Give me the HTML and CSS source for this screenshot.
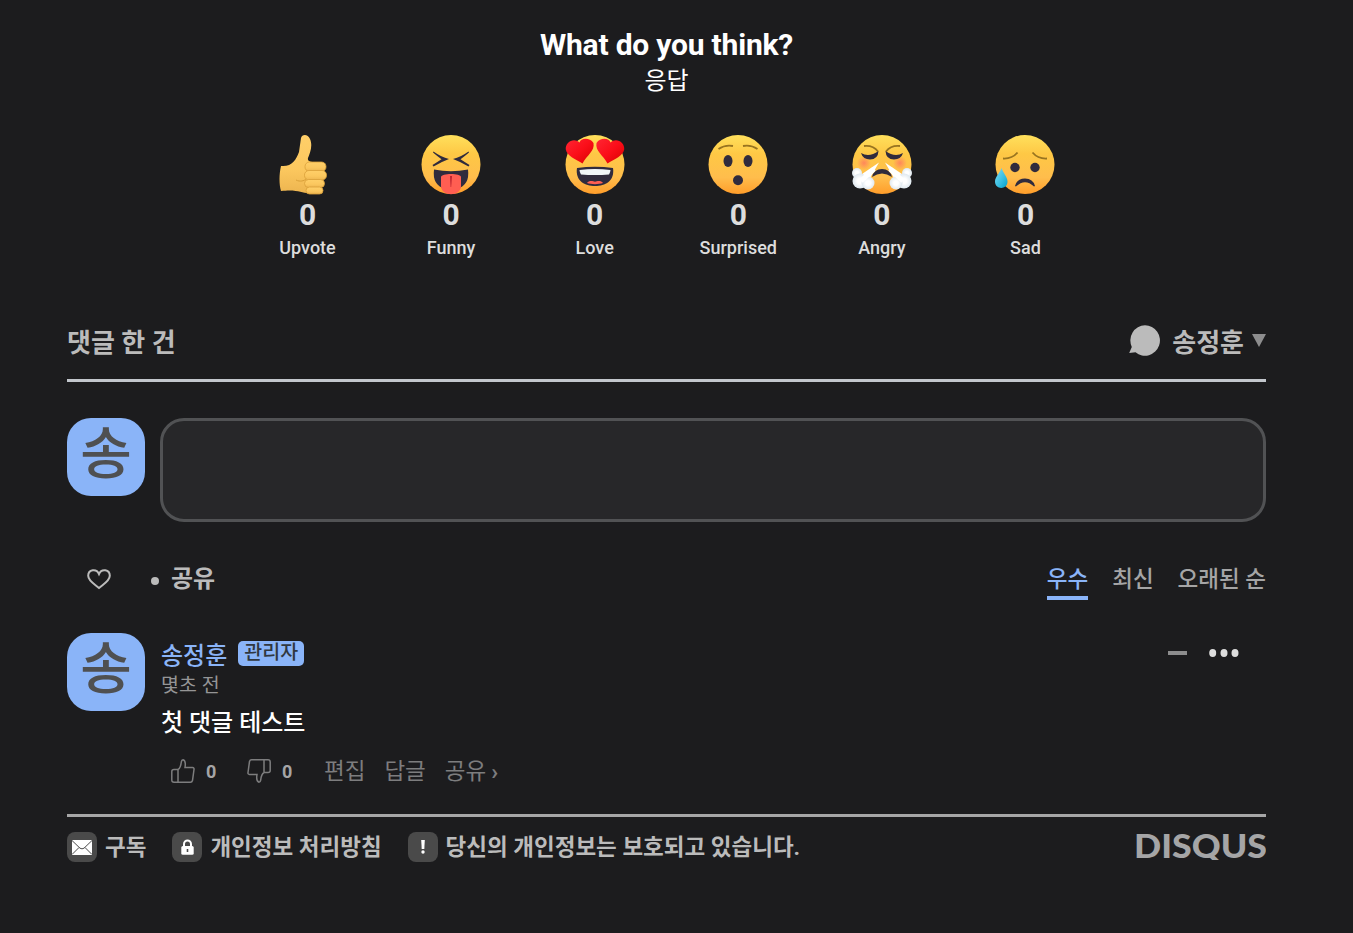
FILE: index.html
```html
<!DOCTYPE html>
<html lang="ko">
<head>
<meta charset="utf-8">
<title>Disqus</title>
<link rel="stylesheet" href="styles.css">
</head>
<body>
<svg class="defs" aria-hidden="true">
  <defs>
    <linearGradient id="face" x1="0" y1="0" x2="0" y2="1">
      <stop offset="0" stop-color="#ffe05c"/><stop offset=".32" stop-color="#fec845"/>
      <stop offset=".72" stop-color="#ffbd4c"/><stop offset="1" stop-color="#ff9d2a"/>
    </linearGradient>
    <linearGradient id="hand" x1="0" y1="0" x2="0" y2="1">
      <stop offset="0" stop-color="#ffcf69"/><stop offset=".6" stop-color="#fbc75e"/><stop offset="1" stop-color="#edb550"/>
    </linearGradient>
    <linearGradient id="heart" x1="0" y1="0" x2="1" y2="1">
      <stop offset="0" stop-color="#ff2633"/><stop offset=".5" stop-color="#fb0e19"/><stop offset="1" stop-color="#d80000"/>
    </linearGradient>
    <linearGradient id="tear" x1="0" y1="0" x2="1" y2="1">
      <stop offset="0" stop-color="#80dcf5"/><stop offset=".6" stop-color="#35bde0"/><stop offset="1" stop-color="#009fca"/>
    </linearGradient>
    <radialGradient id="puff"><stop offset=".35" stop-color="#fff"/><stop offset="1" stop-color="#dfe8ef"/></radialGradient>
    <radialGradient id="blush"><stop offset="0" stop-color="#ff7262" stop-opacity=".75"/><stop offset="1" stop-color="#ff7262" stop-opacity="0"/></radialGradient>
  </defs>
</svg>
<main class="page">
  <section class="reactions">
    <h1 class="reactions-title">What do you think?</h1>
    <p class="reactions-sub">응답</p>
    <ul class="reaction-list">
      <li class="reaction">
        <svg class="emoji" viewBox="0 0 60 60">
          <path d="M23 3C24-1 30-1 32 4C35 11 32 18 30 23C29 27 34 27 40 27L31 58C23 58 19 54 3 56C1 50 1 39 3 31C14 32 18 25 21 17Z" fill="url(#hand)"/>
          <g fill="url(#hand)" stroke="#d9a039" stroke-width=".8">
            <rect x="27" y="27" width="21" height="9.5" rx="4.5"/><rect x="26.5" y="35.5" width="22" height="9.5" rx="4.5"/>
            <rect x="26.5" y="44.5" width="20" height="8" rx="4"/><rect x="28" y="52" width="17" height="7" rx="3.5"/>
          </g>
          <path d="M18 45c4 2 8 1 10-1" fill="none" stroke="#d9a039" stroke-width="1"/>
        </svg>
        <b class="reaction-count">0</b><span class="reaction-name">Upvote</span>
      </li>
      <li class="reaction">
        <svg class="emoji" viewBox="0 0 60 60">
          <circle cx="30" cy="29.5" r="29.5" fill="url(#face)"/>
          <path d="M12.500 16.500Q20 22 28 24Q20 27 12.500 31.500L11.500 30Q17 26.500 20.500 24.200Q16 21 12 17.500ZM47.500 16.500Q40 22 32 24Q40 27 47.500 31.500L48.500 30Q43 26.500 39.500 24.200Q44 21 48 17.500Z" fill="#302b3d"/>
          <path d="M13 34.500Q30 38 47 34.500Q49 50 36 54H24Q11 50 13 34.500Z" fill="#302b3d"/>
          <path d="M20 42c0-4 20-4 20 0v9c0 11-20 11-20 0z" fill="#ff5e52"/>
          <path d="M29 41h2l-.8 11h-.6z" fill="#bd2530"/>
        </svg>
        <b class="reaction-count">0</b><span class="reaction-name">Funny</span>
      </li>
      <li class="reaction">
        <svg class="emoji" viewBox="0 0 60 60">
          <circle cx="30" cy="29.5" r="29.500" fill="url(#face)"/>
          <path id="love-heart" d="M17.500 28.500C10 24 2 21 .8 14.500C0 7 9 2 14.500 7.500C16 2.500 25 2.500 28.500 8C30 16 22 20 17.500 28.500Z" fill="url(#heart)"/>
          <path d="M42.500 28.500C50 24 58 21 59.200 14.500C60 7 51 2 45.500 7.500C44 2.500 35 2.500 31.500 8C30 16 38 20 42.500 28.500Z" fill="url(#heart)"/>
          <path d="M12 33Q30 30.500 48 33C50 46 40 51 30 51S10 46 12 33Z" fill="#302b3d"/>
          <path d="M14.500 35Q30 33 45.500 35Q45.500 37 44 39.500Q30 40.500 16 39.500Q14.500 37 14.500 35Z" fill="#f1f5f8"/>
          <path d="M22 48c2-3 6-2 8-1.200c2-.8 6-1.800 8 1.200c-4 1.500-12 1.500-16 0z" fill="#ff5e52"/>
        </svg>
        <b class="reaction-count">0</b><span class="reaction-name">Love</span>
      </li>
      <li class="reaction">
        <svg class="emoji" viewBox="0 0 60 60">
          <circle cx="30" cy="29.500" r="29.500" fill="url(#face)"/>
          <path d="M10.500 14Q17 9.500 25 11M35 11Q43 9.500 49.500 14" fill="none" stroke="#987420" stroke-width="1.800"/>
          <ellipse cx="20" cy="26" rx="4.500" ry="6" fill="#302b3d"/><ellipse cx="40" cy="26" rx="4.500" ry="6" fill="#302b3d"/>
          <circle cx="30" cy="45.200" r="5" fill="#302b3d"/>
        </svg>
        <b class="reaction-count">0</b><span class="reaction-name">Surprised</span>
      </li>
      <li class="reaction">
        <svg class="emoji" viewBox="0 0 60 60">
          <circle cx="30" cy="29.500" r="29.500" fill="url(#face)"/>
          <circle cx="12" cy="28" r="7" fill="url(#blush)"/><circle cx="48" cy="28" r="7" fill="url(#blush)"/>
          <path d="M12 11Q21 10 26 16.500M48 11Q39 10 34 16.500" fill="none" stroke="#987420" stroke-width="1.800"/>
          <path d="M9 18Q17 23 26.500 16Q26 24.500 18 24.500Q11 24.500 9 18ZM51 18Q43 23 33.500 16Q34 24.500 42 24.500Q49 24.500 51 18Z" fill="#302b3d"/>
          <path d="M20 42Q22 34 30 34T40 42Q30 35 20 42Z" fill="#302b3d"/>
          <path d="M27 27.500L18 43L15 49L6 42L10 39ZM33 27.500L42 43L45 49L54 42L50 39Z" fill="#fff"/>
          <g fill="url(#puff)"><circle cx="5" cy="38" r="5"/><circle cx="8" cy="46" r="7.500"/><circle cx="16" cy="48" r="6.500"/><circle cx="55" cy="38" r="5"/><circle cx="52" cy="46" r="7.500"/><circle cx="44" cy="48" r="6.500"/></g>
          <path d="M22 34L9 46M38 34L51 46" stroke="#fff" stroke-width="5"/>
        </svg>
        <b class="reaction-count">0</b><span class="reaction-name">Angry</span>
      </li>
      <li class="reaction">
        <svg class="emoji" viewBox="0 0 60 60">
          <circle cx="30" cy="29.500" r="29.500" fill="url(#face)"/>
          <path d="M8 23.500Q17 24 22.500 17.500M52 23.500Q43 24 37.500 17.500" fill="none" stroke="#987420" stroke-width="1.800"/>
          <circle cx="20" cy="32.500" r="4.700" fill="#302b3d"/><circle cx="40" cy="32.500" r="4.700" fill="#302b3d"/>
          <path d="M20 51Q22 43.500 30 43.500T40 51L39 51.500Q30 43 21 51.500Z" fill="#302b3d"/>
          <path d="M6.500 33C8 38 12.500 42 12.500 46.500C12.500 55 0 55 0 46.500C0 42 5 38 6.500 33Z" fill="url(#tear)"/>
        </svg>
        <b class="reaction-count">0</b><span class="reaction-name">Sad</span>
      </li>
    </ul>
  </section>

  <header class="thread-head">
    <span class="thread-count">댓글 한 건</span>
    <div class="account">
      <svg class="bubble" viewBox="0 0 31 31"><path d="M16 0.300a15 15.200 0 1 1-9.500 27L.2 28L2.800 22A15 15.200 0 0 1 16 .3Z" fill="#bbb"/></svg>
      <span class="account-name">송정훈</span>
      <svg class="caret" viewBox="0 0 14 13"><path d="M0 0h14L7 13z" fill="#8d8d8e"/></svg>
    </div>
  </header>

  <section class="composer">
    <div class="avatar"><span class="avatar-text">송</span></div>
    <div class="composer-box"></div>
  </section>

  <nav class="thread-nav">
    <svg class="favorite" viewBox="0 0 24 21"><path d="M12 19C8 15.500 1.200 12 1.200 6.800C1.200 .2 9.500-.8 12 5C14.500-.8 22.800 .2 22.800 6.800C22.800 12 16 15.500 12 19Z" fill="none" stroke="#bbb" stroke-width="2"/></svg>
    <span class="dot"></span>
    <span class="share">공유</span>
    <div class="sorts"><span class="sort sort-on">우수</span><span class="sort">최신</span><span class="sort">오래된 순</span></div>
  </nav>

  <article class="comment">
    <div class="avatar avatar-comment"><span class="avatar-text">송</span></div>
    <div class="comment-body">
      <div class="byline">
        <span class="author">송정훈</span><span class="badge">관리자</span>
        <div class="tools"><span class="minus"></span><svg class="more" viewBox="0 0 30 8"><g fill="#ddd"><ellipse cx="3.700" cy="4" rx="3.500" ry="3.900"/><ellipse cx="15" cy="4" rx="3.500" ry="3.900"/><ellipse cx="26" cy="4" rx="3.500" ry="3.900"/></g></svg></div>
      </div>
      <div class="time">몇초 전</div>
      <p class="message">첫 댓글 테스트</p>
      <div class="actions">
        <svg class="thumb" viewBox="0 0 24 24"><path d="M7 10.500C9.500 9 10 6 10.300 3Q10.700.8 12 .8C14.500 1.500 14.500 5.500 14 8.500H21.500Q23.300 8.700 23 10.500L21.500 21.500Q21 23.200 19.500 23.200H3Q.8 23.200.8 21V12.500Q.8 10.500 3 10.500H7V23" fill="none" stroke="#7d7d7e" stroke-width="1.500"/></svg>
        <b class="votes">0</b>
        <svg class="thumb thumb-down" viewBox="0 0 24 24"><path d="M17 13.500C14.500 15 14 18 13.700 21Q13.300 23.200 12 23.200C9.500 22.500 9.500 18.500 10 15.500H2.500Q.7 15.300 1 13.500L2.500 2.500Q3 .8 4.500 .8H21Q23.200 .8 23.200 3V11.500Q23.200 13.500 21 13.500H17V1" fill="none" stroke="#7d7d7e" stroke-width="1.500"/></svg>
        <b class="votes">0</b>
        <span class="action action-edit">편집</span><span class="action">답글</span><span class="action">공유<span class="chevron">›</span></span>
      </div>
    </div>
  </article>

  <footer class="footer">
    <span class="foot-icon"><svg class="mail" viewBox="0 0 20 15"><path d="M0 0h20v15H0z" fill="#fff"/><path d="M0 .5L8 8.200Q10 9.500 12 8.200L20 .5M0 14.500L7 7.500M20 14.500L13 7.500" fill="none" stroke="#4a4a4a" stroke-width="1"/></svg></span>
    <span class="foot-link">구독</span>
    <span class="foot-icon foot-gap-lock"><svg class="lock" viewBox="0 0 13 16"><path d="M3 8V5a3.500 3.500 0 0 1 7 0v3" fill="none" stroke="#fff" stroke-width="2"/><rect x=".3" y="7" width="12.400" height="8.700" rx="1.500" fill="#fff"/><path d="M6.500 10v3" stroke="#4a4a4a" stroke-width="1.600"/></svg></span>
    <span class="foot-link">개인정보 처리방침</span>
    <span class="foot-icon foot-gap-info"><svg class="bang" viewBox="0 0 4 14"><path d="M.2 0h3.600l-.5 9H.7z" fill="#fff"/><circle cx="2" cy="12" r="1.700" fill="#fff"/></svg></span>
    <span class="foot-link">당신의 개인정보는 보호되고 있습니다.</span>
    <svg class="brand" viewBox="0 0 130 26"><text class="brand-text" x="-2" y="24" textLength="133" lengthAdjust="spacingAndGlyphs">DISQUS</text></svg>
  </footer>
</main>
</body>
</html>
```
FILE: styles.css
```css
* { box-sizing: border-box; }
body { margin: 0; background: #1c1c1e; color: #bbb; font-family: Roboto, "Noto Sans CJK KR", sans-serif; }
.defs { position: absolute; width: 0; height: 0; }
.page { width: 1199px; height: 933px; margin-left: 67px; padding-top: 24px; overflow: hidden; }
h1, p, ul { margin: 0; padding: 0; }

.reactions { display: flex; flex-direction: column; align-items: center; height: 280px; }
.reactions-title { color: #fff; font-size: 30px; line-height: 42px; font-weight: 700; letter-spacing: -.2px; }
.reactions-sub { color: #fff; font-size: 24px; line-height: 30px; }
.reaction-list { display: grid; grid-template-columns: repeat(6, 143.600px); margin-top: 39px; list-style: none; }
.reaction { display: flex; flex-direction: column; align-items: center; color: #ddd; }
.emoji { width: 60px; height: 60px; }
.reaction-count { font-size: 30px; line-height: 40px; font-weight: 700; }
.reaction-name { font-size: 18px; line-height: 26px; font-weight: 500; }

.thread-head { display: flex; justify-content: space-between; align-items: center; height: 78px; padding-bottom: 3px; border-bottom: 3px solid #c2c6cc; font-size: 26px; font-weight: 700; }
.account { display: flex; align-items: center; }
.bubble { width: 31px; height: 31px; margin-right: 12px; }
.caret { width: 14px; height: 13px; margin-left: 8px; }

.composer { display: flex; gap: 15px; margin-top: 36px; }
.avatar { display: flex; justify-content: center; flex: none; width: 78px; height: 78px; border-radius: 24px; background: #8ab4f8; color: #4f5051; }
.avatar-text { font-size: 56px; line-height: 72px; font-weight: 500; }
.composer-box { flex: 1; height: 104px; border: 3px solid #515254; border-radius: 24px; background: #272729; }

.thread-nav { display: flex; align-items: center; height: 42px; margin-top: 36px; padding-left: 20px; }
.favorite { width: 24px; height: 21px; }
.dot { width: 8px; height: 8px; margin: 3px 12px 0 40px; border-radius: 50%; background: #bbb; }
.share { font-size: 24px; line-height: 36px; font-weight: 700; }
.sorts { display: flex; gap: 24px; margin-left: auto; }
.sort { height: 42px; border-bottom: 4px solid transparent; color: #a5a5a6; font-size: 22.500px; line-height: 42px; font-weight: 500; }
.sort-on { border-color: #8ab4f8; color: #8ab4f8; }

.comment { display: flex; gap: 16px; height: 181px; margin-top: 33px; }
.comment-body { flex: 1; }
.byline { display: flex; align-items: center; height: 40px; }
.author { color: #8ab4f8; font-size: 24px; font-weight: 500; }
.badge { width: 66px; height: 25px; margin-left: 11px; border-radius: 5px; background: #8ab4f8; color: #303740; font-size: 19.500px; line-height: 23px; font-weight: 500; text-align: center; }
.tools { display: flex; align-items: center; gap: 22px; margin: 0 27px 0 auto; }
.minus { width: 19px; height: 4px; background: #8d8d8e; }
.more { width: 30px; height: 8px; }
.time { color: #959596; font-size: 19.500px; line-height: 25px; }
.message { color: #fff; font-size: 24px; line-height: 50px; font-weight: 500; }
.actions { display: flex; align-items: center; height: 46px; padding-left: 10px; color: #7d7d7e; }
.thumb { width: 24px; height: 24px; }
.thumb-down { margin-left: 29px; }
.votes { width: 12px; margin-left: 11px; color: #a5a5a6; font-size: 18px; }
.action { margin-left: 19px; font-size: 22.500px; line-height: 44px; }
.action-edit { margin-left: 30px; }
.chevron { margin-left: 5px; font-weight: 700; }

.footer { display: flex; align-items: center; height: 63px; border-top: 3px solid #a6a6a7; }
.foot-icon { display: flex; align-items: center; justify-content: center; width: 30px; height: 30px; margin-right: 8px; border-radius: 8px; background: #4a4a4a; }
.foot-gap-lock, .foot-gap-info { margin-left: 26px; }
.mail { width: 20px; height: 15px; }
.lock { width: 13px; height: 16px; }
.bang { width: 4px; height: 14px; }
.foot-link { font-size: 22.500px; line-height: 36px; font-weight: 700; }
.brand { width: 130px; height: 26px; margin-left: auto; }
.brand-text { fill: #a5a5a6; font: 900 32px Lato, sans-serif; }
```
